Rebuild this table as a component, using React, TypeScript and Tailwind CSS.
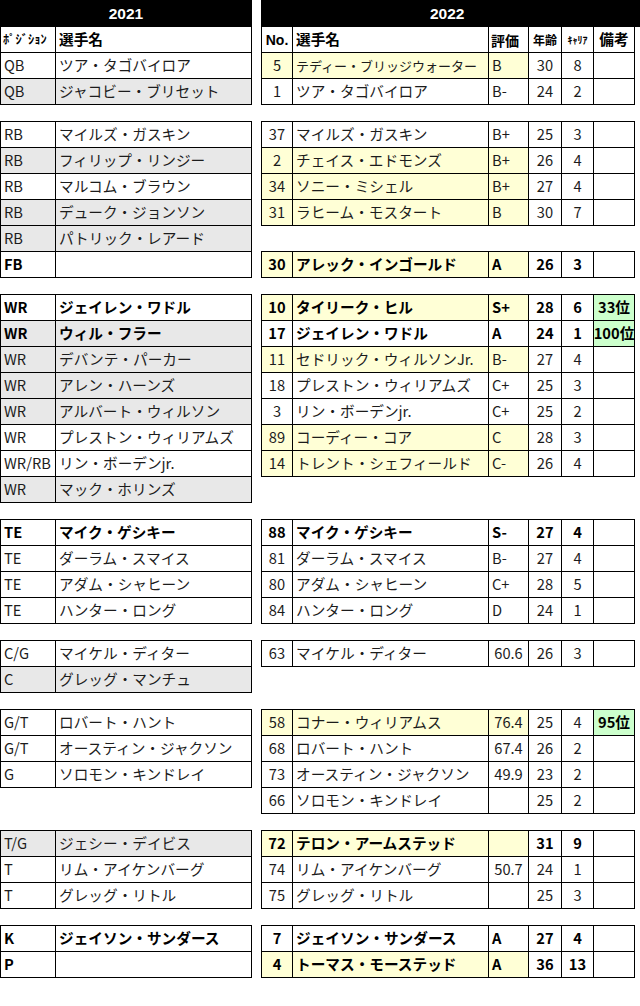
import React from "react";

type LP = { pos?: string; name?: string; b?: boolean; g?: boolean };
type RP = {
  no?: string;
  name?: string;
  grade?: string;
  age?: string;
  car?: string;
  note?: string;
  b?: boolean;
  y?: boolean;
  sm?: boolean;
  num?: boolean;
};

const cell =
  "border-r border-b border-black flex items-center overflow-hidden whitespace-nowrap h-[26px]";

function LRow({ pos, name, b, g }: LP) {
  const bg = g ? "bg-[#e8e8e8]" : "bg-white";
  const w = b ? "font-bold text-black" : "text-[#1c1c1c]";
  return (
    <div className={`grid grid-cols-[55px_196px] ${bg} ${w}`}>
      <div className={`${cell} pl-[3px]`}>{pos}</div>
      <div className={`${cell} pl-[3px]`}>{name}</div>
    </div>
  );
}

function RRow({ no, name, grade, age, car, note, b, y, sm, num }: RP) {
  const ybg = y ? "bg-[#ffffd6]" : "bg-white";
  const w = b ? "font-bold text-black" : "text-[#1c1c1c]";
  return (
    <div className={`grid grid-cols-[31px_196px_40px_33px_32px_41px] ${w}`}>
      <div className={`${cell} ${ybg} justify-center`}>{no}</div>
      <div className={`${cell} ${ybg} pl-[3px] ${sm ? "text-[13px]" : ""}`}>{name}</div>
      <div className={`${cell} ${ybg} ${num ? "justify-center" : "pl-[3px]"}`}>{grade}</div>
      <div className={`${cell} bg-white justify-center`}>{age}</div>
      <div className={`${cell} bg-white justify-center`}>{car}</div>
      <div
        className={`${cell} justify-center ${note ? "bg-[#ccffcc] font-bold text-black" : "bg-white"}`}
      >
        {note}
      </div>
    </div>
  );
}

function LTable({ children }: { children: React.ReactNode }) {
  return <div className="w-[252px] border-l border-t border-black">{children}</div>;
}
function RTable({ children }: { children: React.ReactNode }) {
  return <div className="w-[374px] border-l border-t border-black">{children}</div>;
}

function Section({ left, right, first }: { left: React.ReactNode; right: React.ReactNode; first?: boolean }) {
  return (
    <div className={`flex items-start gap-[9px] ${first ? "" : "mt-4"}`}>
      <div className="w-[252px] shrink-0">{left}</div>
      <div className="shrink-0">{right}</div>
    </div>
  );
}

export default function App() {
  return (
    <div className="w-[640px] h-[1006px] bg-white overflow-hidden font-['Noto_Sans_CJK_JP',sans-serif] text-[14.67px] leading-none">
      <Section
        first
        left={
          <div className="w-[252px]">
            <div className="h-[27px] bg-black text-white font-bold flex items-center justify-center font-['Liberation_Sans',sans-serif] text-[15.5px]">
              2021
            </div>
            <div className="border-l border-black">
              <div className="grid grid-cols-[55px_196px] font-bold text-black">
                <div className={`${cell} pl-[2px] text-[12.5px]`}>ﾎﾟｼﾞｼｮﾝ</div>
                <div className={`${cell} pl-[3px]`}>選手名</div>
              </div>
              <LRow pos="QB" name="ツア・タゴバイロア" />
              <LRow pos="QB" name="ジャコビー・ブリセット" g />
            </div>
          </div>
        }
        right={
          <div>
            <div className="h-[27px] w-[379px] bg-black text-white font-bold flex items-center pl-[169px] font-['Liberation_Sans',sans-serif] text-[15.5px]">
              2022
            </div>
            <div className="w-[374px] border-l border-black">
              <div className="grid grid-cols-[31px_196px_40px_33px_32px_41px] font-bold text-black">
                <div className={`${cell} justify-center font-['Liberation_Sans',sans-serif] text-[14px]`}>No.</div>
                <div className={`${cell} pl-[3px]`}>選手名</div>
                <div className={`${cell} pl-[2px] text-[14px]`}>評価</div>
                <div className={`${cell} justify-center text-[12px]`}>年齢</div>
                <div className={`${cell} justify-center text-[10px]`}>ｷｬﾘｱ</div>
                <div className={`${cell} justify-center text-[14.67px]`}>備考</div>
              </div>
              <RRow no="5" name="テディー・ブリッジウォーター" grade="B" age="30" car="8" y sm />
              <RRow no="1" name="ツア・タゴバイロア" grade="B-" age="24" car="2" />
            </div>
          </div>
        }
      />

      <Section
        left={
          <LTable>
            <LRow pos="RB" name="マイルズ・ガスキン" />
            <LRow pos="RB" name="フィリップ・リンジー" g />
            <LRow pos="RB" name="マルコム・ブラウン" />
            <LRow pos="RB" name="デューク・ジョンソン" g />
            <LRow pos="RB" name="パトリック・レアード" g />
            <LRow pos="FB" b />
          </LTable>
        }
        right={
          <div>
            <RTable>
              <RRow no="37" name="マイルズ・ガスキン" grade="B+" age="25" car="3" />
              <RRow no="2" name="チェイス・エドモンズ" grade="B+" age="26" car="4" y />
              <RRow no="34" name="ソニー・ミシェル" grade="B+" age="27" car="4" y />
              <RRow no="31" name="ラヒーム・モスタート" grade="B" age="30" car="7" y />
            </RTable>
            <div className="h-[25px]" />
            <RTable>
              <RRow no="30" name="アレック・インゴールド" grade="A" age="26" car="3" y b />
            </RTable>
          </div>
        }
      />

      <Section
        left={
          <LTable>
            <LRow pos="WR" name="ジェイレン・ワドル" b />
            <LRow pos="WR" name="ウィル・フラー" b g />
            <LRow pos="WR" name="デバンテ・パーカー" g />
            <LRow pos="WR" name="アレン・ハーンズ" g />
            <LRow pos="WR" name="アルバート・ウィルソン" g />
            <LRow pos="WR" name="プレストン・ウィリアムズ" />
            <LRow pos="WR/RB" name="リン・ボーデンjr." />
            <LRow pos="WR" name="マック・ホリンズ" g />
          </LTable>
        }
        right={
          <RTable>
            <RRow no="10" name="タイリーク・ヒル" grade="S+" age="28" car="6" note="33位" y b />
            <RRow no="17" name="ジェイレン・ワドル" grade="A" age="24" car="1" note="100位" b />
            <RRow no="11" name="セドリック・ウィルソンJr." grade="B-" age="27" car="4" y />
            <RRow no="18" name="プレストン・ウィリアムズ" grade="C+" age="25" car="3" />
            <RRow no="3" name="リン・ボーデンjr." grade="C+" age="25" car="2" />
            <RRow no="89" name="コーディー・コア" grade="C" age="28" car="3" y />
            <RRow no="14" name="トレント・シェフィールド" grade="C-" age="26" car="4" y />
          </RTable>
        }
      />

      <Section
        left={
          <LTable>
            <LRow pos="TE" name="マイク・ゲシキー" b />
            <LRow pos="TE" name="ダーラム・スマイス" />
            <LRow pos="TE" name="アダム・シャヒーン" />
            <LRow pos="TE" name="ハンター・ロング" />
          </LTable>
        }
        right={
          <RTable>
            <RRow no="88" name="マイク・ゲシキー" grade="S-" age="27" car="4" b />
            <RRow no="81" name="ダーラム・スマイス" grade="B-" age="27" car="4" />
            <RRow no="80" name="アダム・シャヒーン" grade="C+" age="28" car="5" />
            <RRow no="84" name="ハンター・ロング" grade="D" age="24" car="1" />
          </RTable>
        }
      />

      <Section
        left={
          <LTable>
            <LRow pos="C/G" name="マイケル・ディター" />
            <LRow pos="C" name="グレッグ・マンチュ" g />
          </LTable>
        }
        right={
          <RTable>
            <RRow no="63" name="マイケル・ディター" grade="60.6" age="26" car="3" num />
          </RTable>
        }
      />

      <Section
        left={
          <LTable>
            <LRow pos="G/T" name="ロバート・ハント" />
            <LRow pos="G/T" name="オースティン・ジャクソン" />
            <LRow pos="G" name="ソロモン・キンドレイ" />
          </LTable>
        }
        right={
          <RTable>
            <RRow no="58" name="コナー・ウィリアムス" grade="76.4" age="25" car="4" note="95位" y num />
            <RRow no="68" name="ロバート・ハント" grade="67.4" age="26" car="2" num />
            <RRow no="73" name="オースティン・ジャクソン" grade="49.9" age="23" car="2" num />
            <RRow no="66" name="ソロモン・キンドレイ" age="25" car="2" />
          </RTable>
        }
      />

      <Section
        left={
          <LTable>
            <LRow pos="T/G" name="ジェシー・デイビス" g />
            <LRow pos="T" name="リム・アイケンバーグ" />
            <LRow pos="T" name="グレッグ・リトル" />
          </LTable>
        }
        right={
          <RTable>
            <RRow no="72" name="テロン・アームステッド" age="31" car="9" y b />
            <RRow no="74" name="リム・アイケンバーグ" grade="50.7" age="24" car="1" num />
            <RRow no="75" name="グレッグ・リトル" age="25" car="3" />
          </RTable>
        }
      />

      <Section
        left={
          <LTable>
            <LRow pos="K" name="ジェイソン・サンダース" b />
            <LRow pos="P" b />
          </LTable>
        }
        right={
          <RTable>
            <RRow no="7" name="ジェイソン・サンダース" grade="A" age="27" car="4" b />
            <RRow no="4" name="トーマス・モーステッド" grade="A" age="36" car="13" y b />
          </RTable>
        }
      />
    </div>
  );
}
